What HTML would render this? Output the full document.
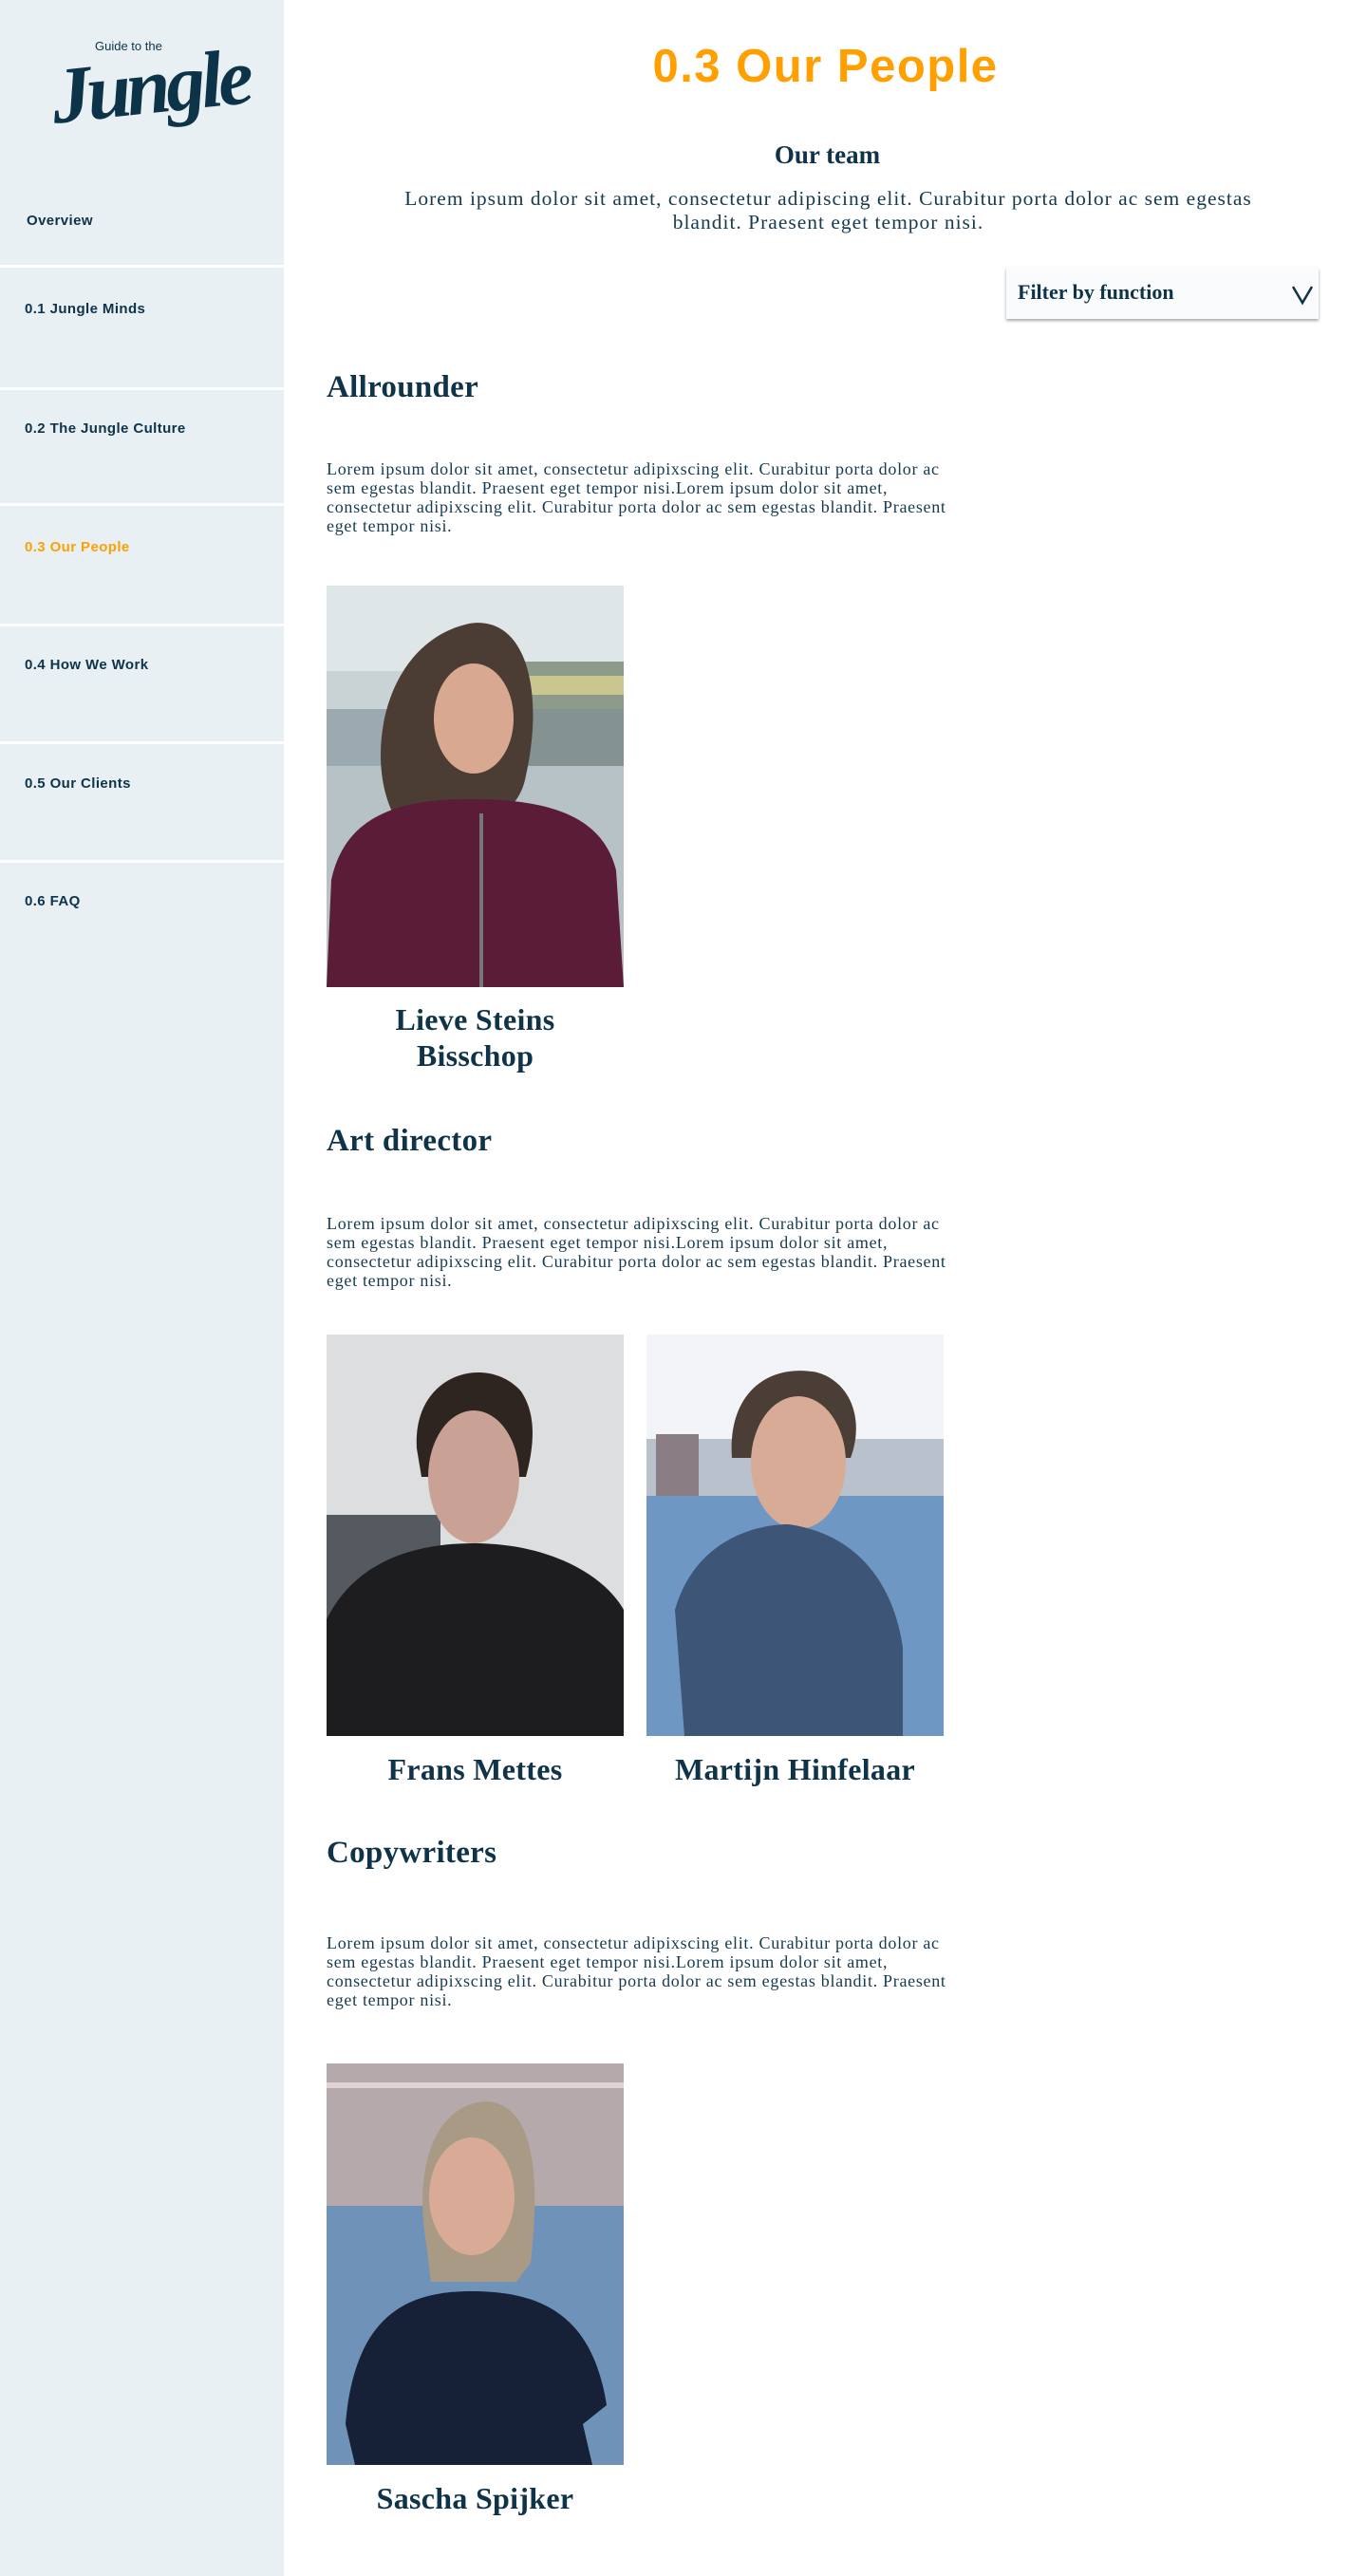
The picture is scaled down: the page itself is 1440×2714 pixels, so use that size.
<!DOCTYPE html>
<html><head><meta charset="utf-8"><style>
*{margin:0;padding:0;box-sizing:border-box}
body{width:1440px;height:2714px;position:relative;background:#fff;font-family:"Liberation Serif",serif;color:#0f3349;overflow:hidden}
.a{position:absolute}
#side{left:0;top:0;width:299px;height:2714px;background:#e8f0f4}
.sep{left:0;width:299px;height:3px;background:#fff}
.nav{font-family:"Liberation Sans",sans-serif;font-weight:bold;font-size:15px;line-height:20px;color:#0f3349;left:26px;letter-spacing:.4px}
.h2{font-weight:bold;font-size:33px;line-height:40px;left:344px;color:#0f3349;letter-spacing:.3px}
.p{left:344px;width:700px;font-size:18px;line-height:20px;color:#163a4f;letter-spacing:.7px;white-space:nowrap}
.name{font-weight:bold;font-size:32px;line-height:38px;text-align:center;width:313px;color:#0f3349;letter-spacing:.3px}
.ph{width:313px;height:423px;overflow:hidden}
</style></head><body>
<div id="side" class="a"></div>
<div class="a" style="left:0;top:0;width:299px;height:170px">
 <div class="a" style="left:100px;top:41px;font-family:'Liberation Sans',sans-serif;font-size:13px;color:#0f3349">Guide to the</div>
 <div class="a" style="left:54px;top:42px;font-family:'Liberation Serif',serif;font-style:italic;font-weight:bold;font-size:84px;line-height:100px;color:#0d3349;letter-spacing:-5px;transform:rotate(-6deg)">Jungle</div>
</div>
<div class="a nav" style="left:28px;top:223px">Overview</div>
<div class="a sep" style="top:279px"></div>
<div class="a nav" style="top:316px">0.1 Jungle Minds</div>
<div class="a sep" style="top:408px"></div>
<div class="a nav" style="top:442px">0.2 The Jungle Culture</div>
<div class="a sep" style="top:530px"></div>
<div class="a nav" style="top:567px;color:#ff9f00">0.3 Our People</div>
<div class="a sep" style="top:657px"></div>
<div class="a nav" style="top:691px">0.4 How We Work</div>
<div class="a sep" style="top:781px"></div>
<div class="a nav" style="top:816px">0.5 Our Clients</div>
<div class="a sep" style="top:906px"></div>
<div class="a nav" style="top:940px">0.6 FAQ</div>

<div class="a" style="left:299px;width:1141px;top:40px;text-align:center;font-family:'Liberation Sans',sans-serif;font-weight:bold;font-size:49px;line-height:60px;color:#ff9f00;letter-spacing:1.5px">0.3 Our People</div>
<div class="a" style="left:299px;width:1145px;top:147px;text-align:center;font-weight:bold;font-size:27px;line-height:32px">Our team</div>
<div class="a" style="left:370px;width:1005px;top:197px;text-align:center;font-size:21.5px;line-height:25px;color:#163a4f;letter-spacing:1px;white-space:nowrap">Lorem ipsum dolor sit amet, consectetur adipiscing elit. Curabitur porta dolor ac sem egestas<br>blandit. Praesent eget tempor nisi.</div>

<div class="a" style="left:1060px;top:282px;width:329px;height:54px;background:#fafbfc;box-shadow:0 2px 3px rgba(0,0,0,.35)">
 <div class="a" style="left:12px;top:13px;font-weight:bold;font-size:22px;line-height:26px">Filter by function</div>
 <svg class="a" style="left:299px;top:17px" width="26" height="24"><path d="M3 3 L13 20 L23 3" fill="none" stroke="#0f3349" stroke-width="2.5"/></svg>
</div>

<div class="a h2" style="top:388px">Allrounder</div>
<div class="a p" style="top:484px">Lorem ipsum dolor sit amet, consectetur adipixscing elit. Curabitur porta dolor ac<br>sem egestas blandit. Praesent eget tempor nisi.Lorem ipsum dolor sit amet,<br>consectetur adipixscing elit. Curabitur porta dolor ac sem egestas blandit. Praesent<br>eget tempor nisi.</div>

<svg class="a ph" style="left:344px;top:617px" viewBox="0 0 313 423" preserveAspectRatio="none">
 <rect width="313" height="423" fill="#c9d3d6"/>
 <rect width="313" height="90" fill="#dfe6e8"/>
 <rect x="190" y="80" width="123" height="110" fill="#8e9a8a"/><rect x="200" y="95" width="113" height="20" fill="#c9c690"/>
 <rect y="130" width="313" height="60" fill="#7d9098" opacity=".6"/>
 <rect y="190" width="313" height="233" fill="#b7c2c6"/>
 <path d="M70 240 C40 180 60 60 150 40 C210 30 230 110 210 200 C200 260 120 270 70 240Z" fill="#4b3d33"/>
 <ellipse cx="155" cy="140" rx="42" ry="58" fill="#d9a890"/>
 <path d="M0 423 L5 310 C20 240 80 225 150 225 C230 225 290 240 305 300 L313 423Z" fill="#5a1c36"/>
 <rect x="161" y="240" width="4" height="183" fill="#777"/>
</svg>
<div class="a name" style="left:344px;top:1055px">Lieve Steins<br>Bisschop</div>

<div class="a h2" style="top:1182px">Art director</div>
<div class="a p" style="top:1279px">Lorem ipsum dolor sit amet, consectetur adipixscing elit. Curabitur porta dolor ac<br>sem egestas blandit. Praesent eget tempor nisi.Lorem ipsum dolor sit amet,<br>consectetur adipixscing elit. Curabitur porta dolor ac sem egestas blandit. Praesent<br>eget tempor nisi.</div>

<svg class="a ph" style="left:344px;top:1406px" viewBox="0 0 313 423" preserveAspectRatio="none">
 <rect width="313" height="423" fill="#dcdedf"/>
 <rect x="0" y="190" width="120" height="130" fill="#555a60"/>
 <path d="M95 120 C90 40 170 20 205 60 C225 90 215 130 210 150 L100 150Z" fill="#2e2520"/>
 <ellipse cx="155" cy="150" rx="48" ry="70" fill="#c9a295"/>
 <path d="M0 423 L0 300 C30 240 90 220 155 220 C230 220 290 250 313 290 L313 423Z" fill="#1d1d20"/>
</svg>
<div class="a name" style="left:344px;top:1845px">Frans Mettes</div>

<svg class="a ph" style="left:681px;top:1406px" viewBox="0 0 313 423" preserveAspectRatio="none">
 <rect width="313" height="423" fill="#f2f4f8"/>
 <rect y="110" width="313" height="60" fill="#b9c2cc"/>
 <rect x="10" y="105" width="45" height="65" fill="#8a7d84"/>
 <rect y="170" width="313" height="253" fill="#6f97c3"/>
 <path d="M90 130 C85 60 130 30 180 40 C215 50 230 90 215 130Z" fill="#4a3e36"/>
 <ellipse cx="160" cy="135" rx="50" ry="70" fill="#d8ab96"/>
 <path d="M40 423 L30 290 C50 220 110 200 150 200 C220 210 260 260 270 330 L270 423Z" fill="#3d5577"/>
</svg>
<div class="a name" style="left:681px;top:1845px;width:313px">Martijn Hinfelaar</div>

<div class="a h2" style="top:1932px">Copywriters</div>
<div class="a p" style="top:2037px">Lorem ipsum dolor sit amet, consectetur adipixscing elit. Curabitur porta dolor ac<br>sem egestas blandit. Praesent eget tempor nisi.Lorem ipsum dolor sit amet,<br>consectetur adipixscing elit. Curabitur porta dolor ac sem egestas blandit. Praesent<br>eget tempor nisi.</div>

<svg class="a ph" style="left:344px;top:2174px" viewBox="0 0 313 423" preserveAspectRatio="none">
 <rect width="313" height="423" fill="#6f93b8"/>
 <rect width="313" height="150" fill="#b6a9ac"/>
 <rect y="20" width="313" height="6" fill="#e1d3d3"/>
 <path d="M105 190 C90 100 120 40 170 40 C220 45 225 120 215 210 L200 230 L110 230Z" fill="#a89a84"/>
 <ellipse cx="153" cy="140" rx="45" ry="62" fill="#d9ab96"/>
 <path d="M20 380 C30 260 90 240 153 240 C220 240 280 260 295 360 L270 380 L280 423 L30 423Z" fill="#162036"/>
</svg>
<div class="a name" style="left:344px;top:2613px">Sascha Spijker</div>
</body></html>
